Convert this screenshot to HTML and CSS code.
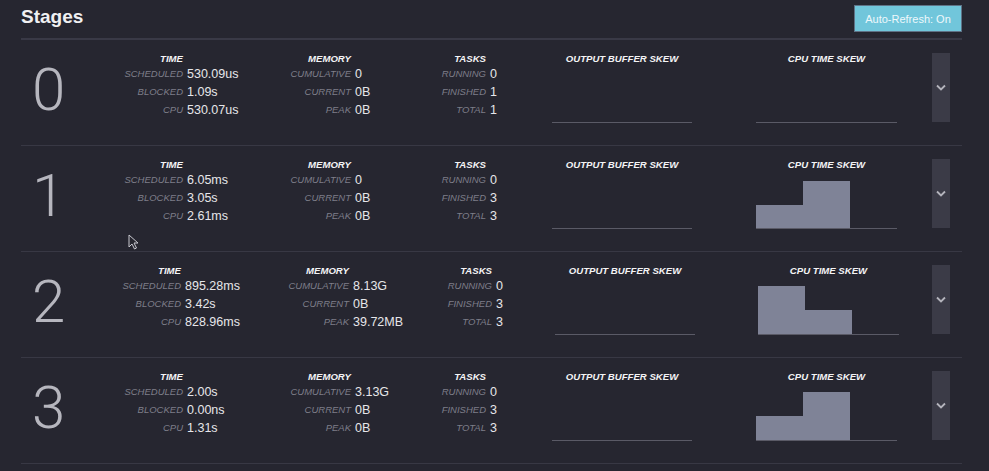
FILE: index.html
```html
<!DOCTYPE html>
<html>
<head>
<meta charset="utf-8">
<title>Stages</title>
<link rel="stylesheet" href="styles.css">
</head>
<body>
<div class="page">
  <header class="top">
    <h2 class="title">Stages</h2>
    <button class="refresh">Auto-Refresh: On</button>
  </header>

  <div class="stage">
    <div class="stage-id">0</div>
    <div class="stat stat-time">
      <div class="stat-title">Time</div>
      <div class="lbl">Scheduled</div><div class="val">530.09us</div>
      <div class="lbl">Blocked</div><div class="val">1.09s</div>
      <div class="lbl">CPU</div><div class="val">530.07us</div>
    </div>
    <div class="stat stat-mem">
      <div class="stat-title">Memory</div>
      <div class="lbl">Cumulative</div><div class="val">0</div>
      <div class="lbl">Current</div><div class="val">0B</div>
      <div class="lbl">Peak</div><div class="val">0B</div>
    </div>
    <div class="stat stat-tasks">
      <div class="stat-title">Tasks</div>
      <div class="lbl">Running</div><div class="val">0</div>
      <div class="lbl">Finished</div><div class="val">1</div>
      <div class="lbl">Total</div><div class="val">1</div>
    </div>
    <div class="skew skew-out">
      <div class="skew-title">Output Buffer Skew</div>
      <div class="chart"></div>
    </div>
    <div class="skew skew-cpu">
      <div class="skew-title">CPU Time Skew</div>
      <div class="chart"></div>
    </div>
    <button class="expand"><svg width="10" height="7" viewBox="0 0 10 7"><polyline points="1,1.5 5,5.5 9,1.5" fill="none" stroke="#b4b4bc" stroke-width="1.8"/></svg></button>
  </div>

  <div class="stage">
    <div class="stage-id">1</div>
    <div class="stat stat-time">
      <div class="stat-title">Time</div>
      <div class="lbl">Scheduled</div><div class="val">6.05ms</div>
      <div class="lbl">Blocked</div><div class="val">3.05s</div>
      <div class="lbl">CPU</div><div class="val">2.61ms</div>
    </div>
    <div class="stat stat-mem">
      <div class="stat-title">Memory</div>
      <div class="lbl">Cumulative</div><div class="val">0</div>
      <div class="lbl">Current</div><div class="val">0B</div>
      <div class="lbl">Peak</div><div class="val">0B</div>
    </div>
    <div class="stat stat-tasks">
      <div class="stat-title">Tasks</div>
      <div class="lbl">Running</div><div class="val">0</div>
      <div class="lbl">Finished</div><div class="val">3</div>
      <div class="lbl">Total</div><div class="val">3</div>
    </div>
    <div class="skew skew-out">
      <div class="skew-title">Output Buffer Skew</div>
      <div class="chart"></div>
    </div>
    <div class="skew skew-cpu">
      <div class="skew-title">CPU Time Skew</div>
      <div class="chart"><div class="bar" style="height:23px"></div><div class="bar" style="height:47px"></div></div>
    </div>
    <button class="expand"><svg width="10" height="7" viewBox="0 0 10 7"><polyline points="1,1.5 5,5.5 9,1.5" fill="none" stroke="#b4b4bc" stroke-width="1.8"/></svg></button>
  </div>

  <div class="stage stage-wide">
    <div class="stage-id">2</div>
    <div class="stat stat-time">
      <div class="stat-title">Time</div>
      <div class="lbl">Scheduled</div><div class="val">895.28ms</div>
      <div class="lbl">Blocked</div><div class="val">3.42s</div>
      <div class="lbl">CPU</div><div class="val">828.96ms</div>
    </div>
    <div class="stat stat-mem">
      <div class="stat-title">Memory</div>
      <div class="lbl">Cumulative</div><div class="val">8.13G</div>
      <div class="lbl">Current</div><div class="val">0B</div>
      <div class="lbl">Peak</div><div class="val">39.72MB</div>
    </div>
    <div class="stat stat-tasks">
      <div class="stat-title">Tasks</div>
      <div class="lbl">Running</div><div class="val">0</div>
      <div class="lbl">Finished</div><div class="val">3</div>
      <div class="lbl">Total</div><div class="val">3</div>
    </div>
    <div class="skew skew-out">
      <div class="skew-title">Output Buffer Skew</div>
      <div class="chart"></div>
    </div>
    <div class="skew skew-cpu">
      <div class="skew-title">CPU Time Skew</div>
      <div class="chart"><div class="bar" style="height:48px"></div><div class="bar" style="height:24px"></div></div>
    </div>
    <button class="expand"><svg width="10" height="7" viewBox="0 0 10 7"><polyline points="1,1.5 5,5.5 9,1.5" fill="none" stroke="#b4b4bc" stroke-width="1.8"/></svg></button>
  </div>

  <div class="stage">
    <div class="stage-id">3</div>
    <div class="stat stat-time">
      <div class="stat-title">Time</div>
      <div class="lbl">Scheduled</div><div class="val">2.00s</div>
      <div class="lbl">Blocked</div><div class="val">0.00ns</div>
      <div class="lbl">CPU</div><div class="val">1.31s</div>
    </div>
    <div class="stat stat-mem">
      <div class="stat-title">Memory</div>
      <div class="lbl">Cumulative</div><div class="val">3.13G</div>
      <div class="lbl">Current</div><div class="val">0B</div>
      <div class="lbl">Peak</div><div class="val">0B</div>
    </div>
    <div class="stat stat-tasks">
      <div class="stat-title">Tasks</div>
      <div class="lbl">Running</div><div class="val">0</div>
      <div class="lbl">Finished</div><div class="val">3</div>
      <div class="lbl">Total</div><div class="val">3</div>
    </div>
    <div class="skew skew-out">
      <div class="skew-title">Output Buffer Skew</div>
      <div class="chart"></div>
    </div>
    <div class="skew skew-cpu">
      <div class="skew-title">CPU Time Skew</div>
      <div class="chart"><div class="bar" style="height:24px"></div><div class="bar" style="height:48px"></div></div>
    </div>
    <button class="expand"><svg width="10" height="7" viewBox="0 0 10 7"><polyline points="1,1.5 5,5.5 9,1.5" fill="none" stroke="#b4b4bc" stroke-width="1.8"/></svg></button>
  </div>
</div>

<svg class="cursor" width="11" height="16" viewBox="0 0 11 16"><path d="M1 1 L1 13 L4 10 L6.5 15 L8.5 14 L6 9 L10 9 Z" fill="#26262f" stroke="#c8c8cf" stroke-width="1"/></svg>
</body>
</html>
```

FILE: styles.css
```css
* {
  box-sizing: border-box;
}

body {
  margin: 0;
  background: #262630;
  font-family: "Liberation Sans", Arial, sans-serif;
  color: #e6e6ea;
}

.page {
  width: 941px;
  margin-left: 21px;
}

.top {
  display: flex;
  justify-content: space-between;
  align-items: flex-start;
  height: 40px;
  border-bottom: 2px solid #393946;
}

.title {
  margin: 6px 0 0;
  font-size: 19px;
  line-height: 22px;
  font-weight: bold;
  color: #f0f0f2;
}

.refresh {
  margin-top: 5px;
  width: 108px;
  height: 27px;
  padding: 0;
  background: #71c6db;
  border: 1px solid #5f7286;
  color: #eef8fb;
  font-family: "Liberation Sans", Arial, sans-serif;
  font-size: 11px;
}

.stage {
  display: flex;
  align-items: flex-start;
  height: 106px;
  border-bottom: 1px solid #383844;
}

.stage-id {
  flex: 0 0 79px;
  padding-left: 11px;
  margin-top: 20px;
  font-family: Roboto, "Liberation Sans", sans-serif;
  font-weight: 300;
  font-size: 60px;
  line-height: 60px;
  color: #b6b6be;
}

.stat {
  flex: 0 0 auto;
  display: grid;
  column-gap: 4px;
  margin-top: 13px;
}

.stat-time {
  grid-template-columns: 83px 73px;
}

.stat-mem {
  grid-template-columns: 91px 55px;
}

.stat-tasks {
  grid-template-columns: 76px 40px;
}

.stat-title {
  grid-column: 1;
  text-align: right;
  font-size: 9.6px;
  line-height: 12px;
  font-weight: bold;
  font-style: italic;
  text-transform: uppercase;
  color: #f4f4f6;
  white-space: nowrap;
}

.lbl {
  grid-column: 1;
  text-align: right;
  font-size: 9.5px;
  line-height: 18px;
  font-style: italic;
  text-transform: uppercase;
  color: #7e7e8a;
  white-space: nowrap;
}

.val {
  grid-column: 2;
  font-size: 12.5px;
  line-height: 18px;
  color: #e6e6ea;
  white-space: nowrap;
}

.skew {
  flex: 0 0 auto;
  margin-top: 13px;
}

.skew-out {
  width: 140px;
  margin-left: 22px;
}

.skew-cpu {
  width: 141px;
  margin-left: 64px;
}

.skew-title {
  text-align: center;
  font-size: 9.6px;
  line-height: 12px;
  font-weight: bold;
  font-style: italic;
  text-transform: uppercase;
  color: #f4f4f6;
  white-space: nowrap;
}

.chart {
  display: flex;
  align-items: flex-end;
  height: 58px;
  border-bottom: 1px solid #5a5a66;
}

.bar {
  width: 47px;
  background: #7f8397;
}

.expand {
  flex: 0 0 18px;
  height: 69px;
  margin-top: 13px;
  margin-left: 35px;
  padding: 0;
  border: none;
  background: #3b3b47;
  display: flex;
  align-items: center;
  justify-content: center;
}

/* row whose table columns were sized wider by its content */
.stage-wide .stat-time {
  grid-template-columns: 81px 75px;
}

.stage-wide .stat-mem {
  grid-template-columns: 89px 57px;
}

.stage-wide .stat-tasks {
  grid-template-columns: 82px 40px;
}

.stage-wide .skew-out {
  margin-left: 19px;
}

.stage-wide .skew-cpu {
  margin-left: 63px;
}

.stage-wide .expand {
  margin-left: 33px;
}

.cursor {
  position: absolute;
  left: 128px;
  top: 234px;
}
```
